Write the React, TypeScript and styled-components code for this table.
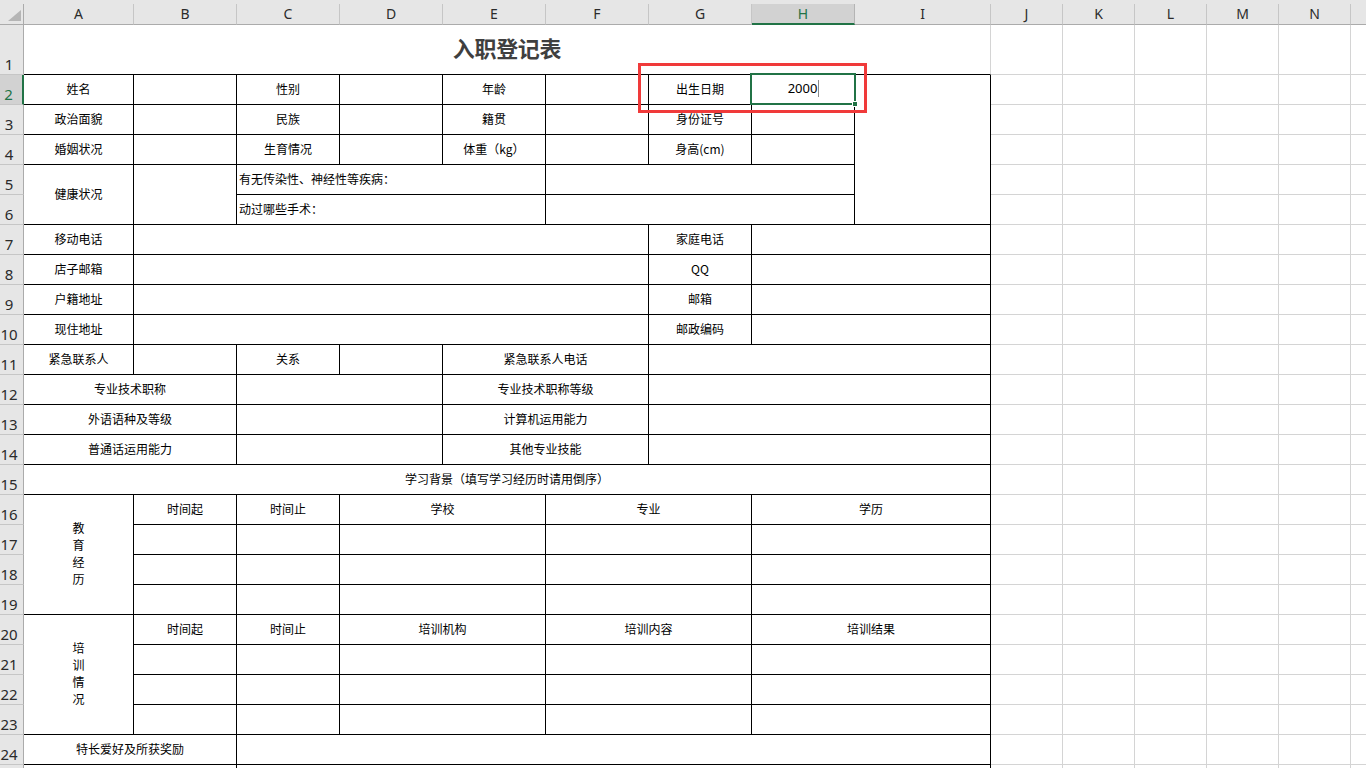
import React from 'react';
import styled, { createGlobalStyle } from 'styled-components';

const GREEN = '#217346';
const GRID = '#d4d4d4';
const HEAD_BG = '#e6e6e6';
const HEAD_SEL = '#d2d2d2';
const HEAD_LINE = '#ababab';
const HEAD_DIV = '#c6c6c6';

const GlobalStyle = createGlobalStyle`
  html, body { margin: 0; padding: 0; background: #fff; }
  body { width: 1366px; height: 768px; overflow: hidden; }
  * { box-sizing: border-box; }
`;

const Viewport = styled.div`
  position: relative;
  width: 1366px;
  height: 768px;
  overflow: hidden;
  background: #fff;
`;

const Sheet = styled.div`
  display: grid;
  grid-template-columns: 24px 110px repeat(7, 103px) 136px repeat(6, 72px);
  grid-template-rows: 4px 21px 50px repeat(25, 30px);
  width: max-content;
`;

const TopStrip = styled.div`
  grid-row: 1;
  grid-column: 1 / -1;
  background: ${HEAD_BG};
`;

const Corner = styled.div`
  grid-row: 2;
  grid-column: 1;
  background: ${HEAD_BG};
  border-right: 1px solid ${HEAD_LINE};
  border-bottom: 1px solid ${HEAD_LINE};
  display: flex;
  align-items: flex-end;
  justify-content: flex-end;
  padding: 0 2px 3px 0;
`;

const ColHead = styled.div<{ $col: number; $sel?: boolean }>`
  grid-row: 2;
  grid-column: ${p => p.$col + 1};
  background: ${p => (p.$sel ? HEAD_SEL : HEAD_BG)};
  border-right: 1px solid ${p => (p.$sel ? '#b4b4b4' : HEAD_DIV)};
  border-bottom: ${p => (p.$sel ? `2px solid ${GREEN}` : `1px solid ${HEAD_LINE}`)};
  color: ${p => (p.$sel ? GREEN : '#2b2b2b')};
  font: 14px 'Noto Sans', 'Open Sans', sans-serif;
  display: flex;
  align-items: center;
  justify-content: center;
  line-height: 1;
  padding-bottom: ${p => (p.$sel ? '0' : '1px')};
`;

const RowHead = styled.div<{ $row: number; $sel?: boolean }>`
  grid-row: ${p => p.$row + 2};
  grid-column: 1;
  background: ${p => (p.$sel ? HEAD_SEL : HEAD_BG)};
  border-right: ${p => (p.$sel ? `2px solid ${GREEN}` : `1px solid ${HEAD_LINE}`)};
  border-bottom: 1px solid ${HEAD_DIV};
  color: ${p => (p.$sel ? GREEN : '#2b2b2b')};
  font: 15px 'Noto Sans', 'Open Sans', sans-serif;
  line-height: 1;
  display: flex;
  align-items: flex-end;
  justify-content: center;
  padding: 0 5px 2px 0;
`;

type Kind = 'table' | 'title' | 'plain';

const Cell = styled.div<{
  $r: number;
  $c: number;
  $rs: number;
  $cs: number;
  $kind: Kind;
  $left?: boolean;
}>`
  position: relative;
  grid-row: ${p => p.$r + 2} / span ${p => p.$rs};
  grid-column: ${p => p.$c + 1} / span ${p => p.$cs};
  border-right: 1px solid ${p => (p.$kind === 'table' ? '#000' : GRID)};
  border-bottom: 1px solid ${p => (p.$kind === 'plain' ? GRID : '#000')};
  display: flex;
  align-items: center;
  justify-content: ${p => (p.$left ? 'flex-start' : 'center')};
  padding-left: ${p => (p.$left ? '2px' : '0')};
  padding-bottom: ${p => (p.$kind === 'title' ? '6px' : '3px')};
  font: 12px 'Noto Sans CJK SC', 'Noto Sans', sans-serif;
  color: #000;
  white-space: nowrap;
`;

const Title = styled.span`
  font: 700 22px 'Noto Sans CJK SC', sans-serif;
  color: #3f3f3f;
  letter-spacing: -0.3px;
`;

const Stacked = styled.span`
  white-space: pre-line;
  text-align: center;
  line-height: 17px;
`;

const EditValue = styled.span`
  font: 13px 'Noto Sans', 'Noto Sans CJK SC', sans-serif;
  display: inline-flex;
  align-items: center;
  padding-left: 1px;
`;

const Caret = styled.span`
  display: inline-block;
  width: 1px;
  height: 17px;
  margin-left: 1px;
  background: #8a8a8a;
`;

const Selection = styled.div`
  position: absolute;
  left: -2px;
  top: -2px;
  right: -2px;
  bottom: -1px;
  border: 2px solid ${GREEN};
  pointer-events: none;
  z-index: 2;
`;

const FillHandle = styled.div`
  position: absolute;
  right: -4px;
  bottom: -4px;
  width: 6px;
  height: 6px;
  background: ${GREEN};
  border: 1px solid #fff;
`;

const Annotation = styled.div`
  position: absolute;
  left: 638px;
  top: 63px;
  width: 229px;
  height: 50px;
  border: 3px solid #f03a3a;
  z-index: 3;
  pointer-events: none;
`;

type Def = {
  r: number;
  c: number;
  rs?: number;
  cs?: number;
  t?: string;
  left?: boolean;
  stacked?: boolean;
  edit?: boolean;
};

const table: Def[] = [];
const add = (d: Def) => table.push(d);

const r2 = ['姓名', '', '性别', '', '年龄', '', '出生日期'];
const r3 = ['政治面貌', '', '民族', '', '籍贯', '', '身份证号', ''];
const r4 = ['婚姻状况', '', '生育情况', '', '体重（kg）', '', '身高(cm)', ''];
r2.forEach((t, i) => add({ r: 2, c: i + 1, t }));
add({ r: 2, c: 8, t: '2000', edit: true });
add({ r: 2, c: 9, rs: 5 });
r3.forEach((t, i) => add({ r: 3, c: i + 1, t }));
r4.forEach((t, i) => add({ r: 4, c: i + 1, t }));
add({ r: 5, c: 1, rs: 2, t: '健康状况' });
add({ r: 5, c: 2, rs: 2 });
add({ r: 5, c: 3, cs: 3, t: '有无传染性、神经性等疾病：', left: true });
add({ r: 5, c: 6, cs: 3 });
add({ r: 6, c: 3, cs: 3, t: '动过哪些手术：', left: true });
add({ r: 6, c: 6, cs: 3 });
[
  ['移动电话', '家庭电话'],
  ['店子邮箱', 'QQ'],
  ['户籍地址', '邮箱'],
  ['现住地址', '邮政编码'],
].forEach(([a, g], i) => {
  const r = 7 + i;
  add({ r, c: 1, t: a });
  add({ r, c: 2, cs: 5 });
  add({ r, c: 7, t: g });
  add({ r, c: 8, cs: 2 });
});
add({ r: 11, c: 1, t: '紧急联系人' });
add({ r: 11, c: 2 });
add({ r: 11, c: 3, t: '关系' });
add({ r: 11, c: 4 });
add({ r: 11, c: 5, cs: 2, t: '紧急联系人电话' });
add({ r: 11, c: 7, cs: 3 });
[
  ['专业技术职称', '专业技术职称等级'],
  ['外语语种及等级', '计算机运用能力'],
  ['普通话运用能力', '其他专业技能'],
].forEach(([a, e], i) => {
  const r = 12 + i;
  add({ r, c: 1, cs: 2, t: a });
  add({ r, c: 3, cs: 2 });
  add({ r, c: 5, cs: 2, t: e });
  add({ r, c: 7, cs: 3 });
});
add({ r: 15, c: 1, cs: 9, t: '学习背景（填写学习经历时请用倒序）' });
const block = (start: number, label: string, heads: string[]) => {
  add({ r: start, c: 1, rs: 4, t: label, stacked: true });
  for (let k = 0; k < 4; k++) {
    const r = start + k;
    const h = k === 0 ? heads : ['', '', '', '', ''];
    add({ r, c: 2, t: h[0] });
    add({ r, c: 3, t: h[1] });
    add({ r, c: 4, cs: 2, t: h[2] });
    add({ r, c: 6, cs: 2, t: h[3] });
    add({ r, c: 8, cs: 2, t: h[4] });
  }
};
block(16, '教\n育\n经\n历', ['时间起', '时间止', '学校', '专业', '学历']);
block(20, '培\n训\n情\n况', ['时间起', '时间止', '培训机构', '培训内容', '培训结果']);
add({ r: 24, c: 1, cs: 2, t: '特长爱好及所获奖励' });
add({ r: 24, c: 3, cs: 7 });
add({ r: 25, c: 1, cs: 2 });
add({ r: 25, c: 3, cs: 7 });

// column O and row 25 are only slivers on screen, so their labels are not shown
const LETTERS = ['A', 'B', 'C', 'D', 'E', 'F', 'G', 'H', 'I', 'J', 'K', 'L', 'M', 'N', ''];
const ROWS = Array.from({ length: 25 }, (_, i) => i + 1);

const CornerMark = () => (
  <svg width="13" height="11" viewBox="0 0 13 11">
    <polygon points="0,11 13,11 13,0" fill="#b5b5b5" />
  </svg>
);

export default function App() {
  return (
    <>
      <GlobalStyle />
      <Viewport>
        <Sheet>
          <TopStrip />
          <Corner>
            <CornerMark />
          </Corner>
          {LETTERS.map((l, i) => (
            <ColHead key={i} $col={i + 1} $sel={l === 'H'}>
              {l}
            </ColHead>
          ))}
          {ROWS.map(r => (
            <RowHead key={r} $row={r} $sel={r === 2}>
              {r < 25 ? r : ''}
            </RowHead>
          ))}

          <Cell $r={1} $c={1} $rs={1} $cs={9} $kind="title">
            <Title>入职登记表</Title>
          </Cell>

          {table.map((d, i) => (
            <Cell
              key={i}
              $r={d.r}
              $c={d.c}
              $rs={d.rs ?? 1}
              $cs={d.cs ?? 1}
              $kind="table"
              $left={d.left}
            >
              {d.stacked ? (
                <Stacked>{d.t}</Stacked>
              ) : d.edit ? (
                <>
                  <EditValue>
                    {d.t}
                    <Caret />
                  </EditValue>
                  <Selection>
                    <FillHandle />
                  </Selection>
                </>
              ) : (
                d.t
              )}
            </Cell>
          ))}

          {ROWS.flatMap(r =>
            [10, 11, 12, 13, 14, 15].map(c => (
              <Cell key={`p-${r}-${c}`} $r={r} $c={c} $rs={1} $cs={1} $kind="plain" />
            ))
          )}
        </Sheet>
        <Annotation />
      </Viewport>
    </>
  );
}
